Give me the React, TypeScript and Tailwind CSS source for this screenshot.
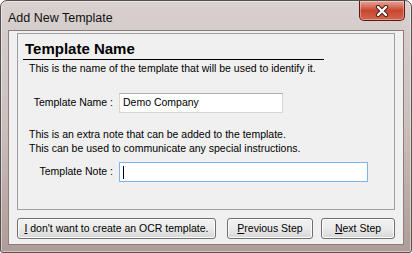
import React from 'react';

const font = { fontFamily: '"Liberation Sans", Arial, sans-serif' };

function CloseButton() {
  return (
    <div className="w-[46px] h-[20px] rounded-b-[5px] border border-[#5e1a12] border-t-0 bg-gradient-to-b from-[#e8a497] via-[#c7462f] to-[#d3664b] flex items-center justify-center shadow-[inset_0_0_0_1px_rgba(255,255,255,0.35)]">
      <svg width="14" height="12" viewBox="0 0 14 12">
        <path d="M3 2 L11 10 M11 2 L3 10" stroke="#3d1a14" strokeWidth="4.2" strokeLinecap="round" />
        <path d="M3 2 L11 10 M11 2 L3 10" stroke="#ffffff" strokeWidth="2.4" strokeLinecap="round" />
      </svg>
    </div>
  );
}

function WinButton({ children, className }: { children: React.ReactNode; className: string }) {
  return (
    <button
      className={`h-[21px] whitespace-nowrap rounded-[3px] border border-[#707070] bg-gradient-to-b from-[#f2f2f2] via-[#ebebeb] to-[#d6d6d6] text-[10.5px] text-black shadow-[inset_0_0_0_1px_#fcfcfc] ${className}`}
      style={font}
    >
      {children}
    </button>
  );
}

export default function App() {
  return (
    <div className="w-[412px] h-[253px] overflow-hidden bg-white">
      <div className="w-[412px] h-[253px] rounded-t-[7px] rounded-b-[3px] border border-[#56504e] bg-gradient-to-b from-[#d8d1cf] via-[#cbbfbc] to-[#ad9c98] flex flex-col shadow-[inset_0_0_0_1px_rgba(255,255,255,0.45)]">
        <div className="h-[29px] flex items-start justify-between pl-[7px] pr-[6px]">
          <div className="pt-[8px] text-[12.5px] text-[#111]" style={font}>Add New Template</div>
          <CloseButton />
        </div>
        <div className="mx-[7px] h-[215px] bg-[#f0f0f0] border border-[#8c7f7b] flex flex-col px-[8px] pt-[2px]" style={font}>
          <div className="h-[177px] border border-[#a0a0a0] bg-[#f0f0f0] flex flex-col">
            <div className="ml-[5px] mt-[7px] w-[301px] border-b border-black pl-[2px] pb-[2px] text-[15px] font-bold leading-[16px] text-black">
              Template Name
            </div>
            <div className="ml-[11px] mt-[1px] text-[10.5px] leading-[14px] text-black">
              This is the name of the template that will be used to identify it.
            </div>
            <div className="flex items-center mt-[18px]">
              <div className="w-[101px] text-right pr-[6px] text-[10.5px] text-black">Template Name :</div>
              <div className="w-[164px] h-[20px] bg-white border border-[#d5d5d5] border-t-[#abadb3] flex items-center pl-[3px] text-[10.5px] text-black">
                Demo Company
              </div>
            </div>
            <div className="ml-[11px] mt-[14px] text-[10.5px] leading-[14px] text-black">
              This is an extra note that can be added to the template.
              <br />
              This can be used to communicate any special instructions.
            </div>
            <div className="flex items-center mt-[7px]">
              <div className="w-[101px] text-right pr-[6px] text-[10.5px] text-black">Template Note :</div>
              <div className="w-[249px] h-[20px] bg-white border border-[#7eb4ea] flex items-center pl-[3px]">
                <div className="w-px h-[13px] bg-black" />
              </div>
            </div>
          </div>
          <div className="flex mt-[8px]">
            <WinButton className="w-[199px]">
              <span className="underline">I</span> don't want to create an OCR template.
            </WinButton>
            <WinButton className="w-[86px] ml-[11px]">
              <span className="underline">P</span>revious Step
            </WinButton>
            <WinButton className="w-[74px] ml-[8px]">
              <span className="underline">N</span>ext Step
            </WinButton>
          </div>
        </div>
      </div>
    </div>
  );
}
